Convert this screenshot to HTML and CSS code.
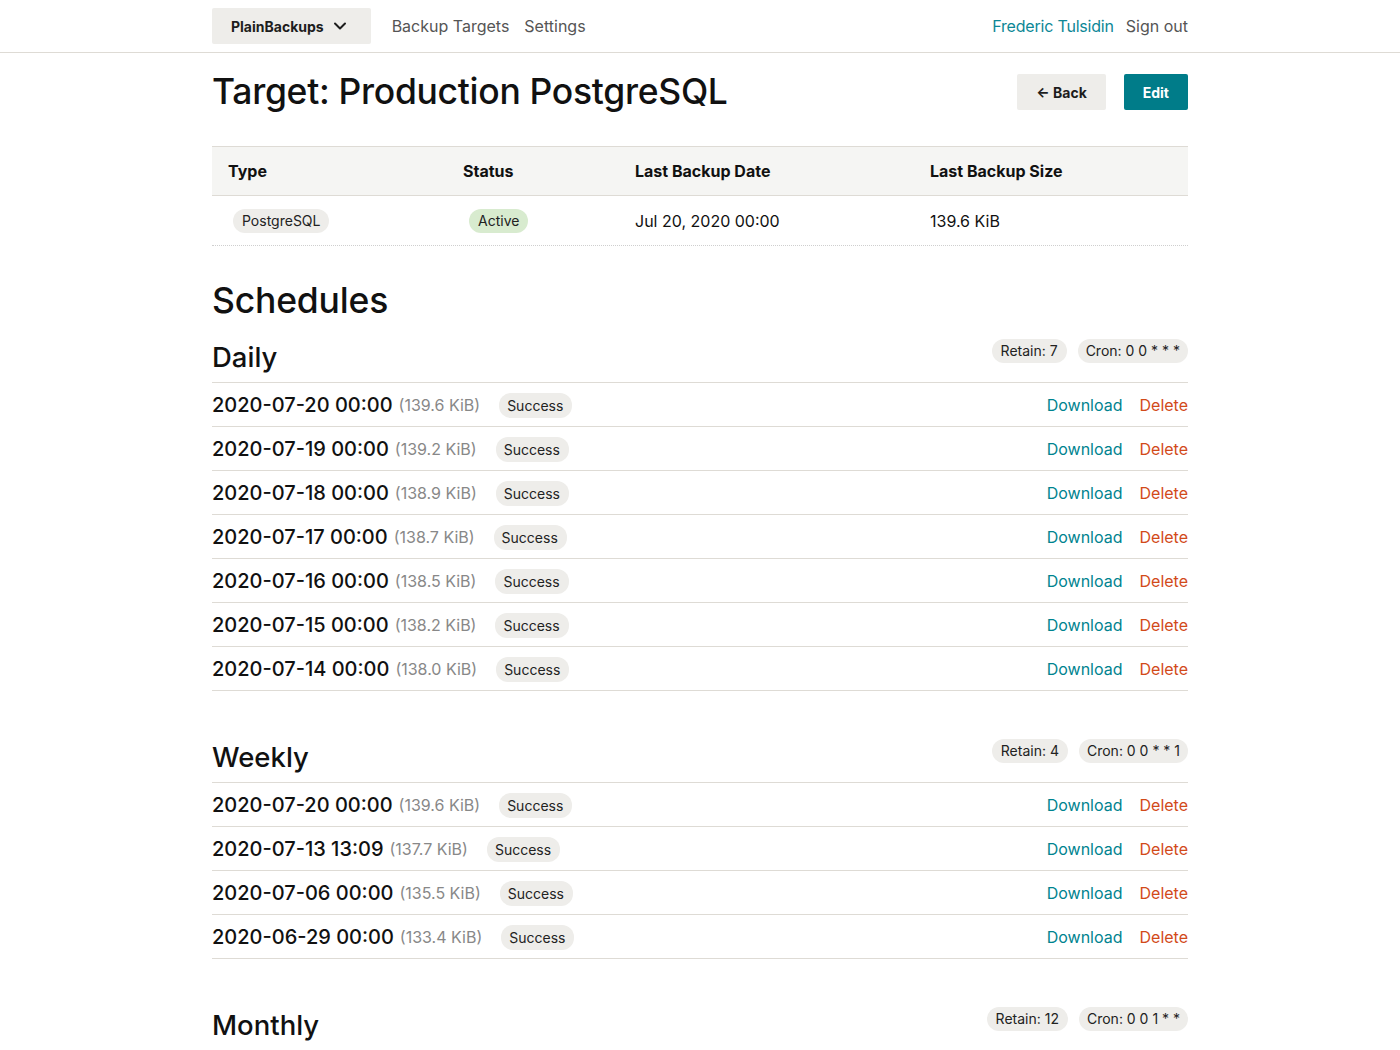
FILE: index.html
```html
<!DOCTYPE html>
<html lang="en">
<head>
<meta charset="utf-8">
<title>Target: Production PostgreSQL</title>
<link rel="stylesheet" href="styles.css">
</head>
<body>
<nav class="nav">
  <div class="container nav-inner">
    <div class="nav-left">
      <a class="brand" href="#">PlainBackups
        <svg class="chev" width="14" height="14" viewBox="0 0 14 14"><polyline points="2,4.5 7,9.5 12,4.5" fill="none" stroke="#1d1d1d" stroke-width="2" stroke-linecap="round" stroke-linejoin="round"/></svg>
      </a>
      <a class="nav-link" href="#">Backup Targets</a>
      <a class="nav-link" href="#">Settings</a>
    </div>
    <div class="nav-right">
      <a class="user" href="#">Frederic Tulsidin</a>
      <a class="nav-link" href="#">Sign out</a>
    </div>
  </div>
</nav>

<main class="container">
  <div class="page-head">
    <h1>Target: Production PostgreSQL</h1>
    <div class="actions">
      <a class="btn btn-light" href="#">← Back</a>
      <a class="btn btn-primary" href="#">Edit</a>
    </div>
  </div>

  <div class="info">
    <div class="info-row info-head">
      <div>Type</div><div>Status</div><div>Last Backup Date</div><div>Last Backup Size</div>
    </div>
    <div class="info-row info-body">
      <div><span class="pill pill-cell">PostgreSQL</span></div>
      <div><span class="pill pill-cell pill-green">Active</span></div>
      <div>Jul 20, 2020 00:00</div>
      <div>139.6 KiB</div>
    </div>
  </div>

  <h2>Schedules</h2>

  <section class="schedule">
    <div class="sched-head">
      <h3>Daily</h3>
      <div class="tags"><span class="pill">Retain: 7</span><span class="pill">Cron: 0 0 * * *</span></div>
    </div>
    <div class="row"><div class="left"><span class="date">2020-07-20 00:00</span><span class="size">(139.6 KiB)</span><span class="pill">Success</span></div><div class="links"><a class="dl" href="#">Download</a><a class="del" href="#">Delete</a></div></div>
    <div class="row"><div class="left"><span class="date">2020-07-19 00:00</span><span class="size">(139.2 KiB)</span><span class="pill">Success</span></div><div class="links"><a class="dl" href="#">Download</a><a class="del" href="#">Delete</a></div></div>
    <div class="row"><div class="left"><span class="date">2020-07-18 00:00</span><span class="size">(138.9 KiB)</span><span class="pill">Success</span></div><div class="links"><a class="dl" href="#">Download</a><a class="del" href="#">Delete</a></div></div>
    <div class="row"><div class="left"><span class="date">2020-07-17 00:00</span><span class="size">(138.7 KiB)</span><span class="pill">Success</span></div><div class="links"><a class="dl" href="#">Download</a><a class="del" href="#">Delete</a></div></div>
    <div class="row"><div class="left"><span class="date">2020-07-16 00:00</span><span class="size">(138.5 KiB)</span><span class="pill">Success</span></div><div class="links"><a class="dl" href="#">Download</a><a class="del" href="#">Delete</a></div></div>
    <div class="row"><div class="left"><span class="date">2020-07-15 00:00</span><span class="size">(138.2 KiB)</span><span class="pill">Success</span></div><div class="links"><a class="dl" href="#">Download</a><a class="del" href="#">Delete</a></div></div>
    <div class="row"><div class="left"><span class="date">2020-07-14 00:00</span><span class="size">(138.0 KiB)</span><span class="pill">Success</span></div><div class="links"><a class="dl" href="#">Download</a><a class="del" href="#">Delete</a></div></div>
  </section>

  <section class="schedule">
    <div class="sched-head">
      <h3>Weekly</h3>
      <div class="tags"><span class="pill">Retain: 4</span><span class="pill">Cron: 0 0 * * 1</span></div>
    </div>
    <div class="row"><div class="left"><span class="date">2020-07-20 00:00</span><span class="size">(139.6 KiB)</span><span class="pill">Success</span></div><div class="links"><a class="dl" href="#">Download</a><a class="del" href="#">Delete</a></div></div>
    <div class="row"><div class="left"><span class="date">2020-07-13 13:09</span><span class="size">(137.7 KiB)</span><span class="pill">Success</span></div><div class="links"><a class="dl" href="#">Download</a><a class="del" href="#">Delete</a></div></div>
    <div class="row"><div class="left"><span class="date">2020-07-06 00:00</span><span class="size">(135.5 KiB)</span><span class="pill">Success</span></div><div class="links"><a class="dl" href="#">Download</a><a class="del" href="#">Delete</a></div></div>
    <div class="row"><div class="left"><span class="date">2020-06-29 00:00</span><span class="size">(133.4 KiB)</span><span class="pill">Success</span></div><div class="links"><a class="dl" href="#">Download</a><a class="del" href="#">Delete</a></div></div>
  </section>

  <section class="schedule">
    <div class="sched-head">
      <h3>Monthly</h3>
      <div class="tags"><span class="pill">Retain: 12</span><span class="pill">Cron: 0 0 1 * *</span></div>
    </div>
  </section>
</main>
</body>
</html>
```

FILE: styles.css
```css
* { box-sizing: border-box; }
html, body { margin: 0; padding: 0; }
body {
  font-family: Inter, "Noto Sans", sans-serif;
  color: #111;
  background: #fff;
  font-size: 16px;
}
a { text-decoration: none; }
.container { width: 976px; margin: 0 auto; }

.nav { border-bottom: 1px solid #dedbd5; height: 53px; }
.nav-inner { display: flex; justify-content: space-between; align-items: center; height: 52px; }
.nav-left, .nav-right { display: flex; align-items: center; }
.brand {
  display: flex; align-items: center; gap: 9px;
  height: 36px; padding: 0 24px 0 19px;
  background: #eeedea; border-radius: 2px;
  font-size: 14px; font-weight: 700; color: #1d1d1d;
  margin-right: 21px;
}
.chev { display: block; }
.nav-link { color: #555; font-size: 16px; margin-right: 15px; }
.nav-left .nav-link:last-child { margin-right: 0; }
.nav-right .nav-link { margin-right: 0; }
.user { color: #0c8796; font-size: 16px; margin-right: 12px; letter-spacing: -0.2px; }

.page-head { display: flex; justify-content: space-between; align-items: center; margin-top: 19px; height: 40px; }
h1 { margin: 0; font-size: 35.5px; font-weight: 500; line-height: 40px; letter-spacing: -0.3px; }
.actions { display: flex; gap: 18px; }
.btn {
  display: flex; align-items: center; justify-content: center;
  height: 36px; padding: 0 19px; border-radius: 2px;
  font-size: 14px; font-weight: 700;
}
.btn-light { background: #eeedea; color: #1d1d1d; }
.btn-primary { background: #007c89; color: #fff; padding: 0 19px; }

.info { margin-top: 34px; border-top: 1px solid #dedbd5; }
.info-row { display: grid; grid-template-columns: 235px 172px 295px 274px; align-items: center; }
.info-row > div { padding-left: 16px; }
.info-head { background: #f5f5f3; height: 49px; font-weight: 700; border-bottom: 1px solid #dedbd5; }
.info-body { height: 50px; border-bottom: 1px dotted #cfcfcf; font-size: 16px; }

.pill {
  display: inline-flex; align-items: center;
  height: 24px; padding: 0 9px; border-radius: 12px;
  background: #eeedea; color: #222; font-size: 14px;
}
.pill-cell { margin-left: 5px; }
.pill-green { background: #d8ebcf; margin-left: 6px; }

h2 { margin: 35px 0 11px; font-size: 35.5px; font-weight: 500; line-height: 40px; letter-spacing: -0.2px; }

.schedule { margin-bottom: 41px; }
.sched-head {
  display: flex; justify-content: space-between; align-items: center;
  height: 51px; border-bottom: 1px solid #dedbd5;
}
h3 { margin: 0; font-size: 27.5px; font-weight: 500; line-height: 36px; }
.tags { display: flex; gap: 11px; margin-bottom: 13px; }
.tags .pill:last-child { padding: 0 8px; }

.row {
  display: flex; justify-content: space-between; align-items: center;
  height: 44px; border-bottom: 1px solid #dedbd5;
}
.left { display: flex; align-items: center; }
.date { font-size: 20px; font-weight: 500; }
.size { color: #888; font-size: 16px; margin-left: 6px; margin-right: 19px; }
.row .pill { height: 25px; margin-top: 2px; padding: 0 9px 0 8px; }
.links { display: flex; gap: 17px; font-size: 16px; }
.dl { color: #00838f; }
.del { color: #d24a1a; }
```
